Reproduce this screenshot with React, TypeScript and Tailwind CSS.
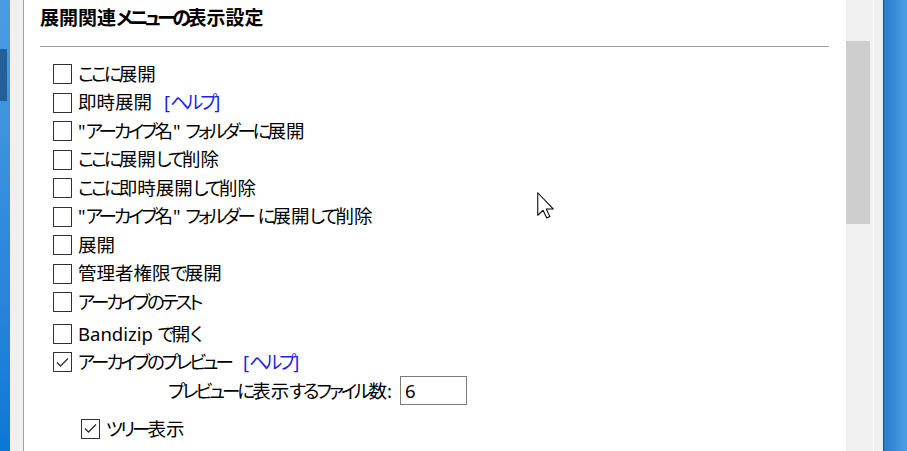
import React from "react";

const font = {
  fontFamily: '"Noto Sans", "Noto Sans CJK JP", sans-serif',
};

// kana in the original UI font are much narrower than in Noto Sans CJK,
// so tighten runs of kana a bit
function Jp({ text, kana = "tracking-[-3px]" }: { text: string; kana?: string }) {
  const parts = text.split(/([\u3040-\u30ff]+)/);
  return (
    <>
      {parts.map((p, i) =>
        /^[\u3040-\u30ff]+$/.test(p) ? (
          <span key={i} className={kana}>
            {p}
          </span>
        ) : (
          <span key={i}>{p}</span>
        ),
      )}
    </>
  );
}

function CheckBox({ checked }: { checked?: boolean }) {
  return (
    <span className="flex h-[20px] w-[19px] shrink-0 items-center justify-center border border-[#333333] bg-white">
      {checked && (
        <svg width="15" height="15" viewBox="0 0 15 15">
          <polyline
            points="2,7.5 5.5,11 13,3.5"
            fill="none"
            stroke="#333333"
            strokeWidth="1.4"
          />
        </svg>
      )}
    </span>
  );
}

function Help() {
  return (
    <span className="ml-[12px] text-[#1f1fe8]">
      [<Jp text="ヘルプ" />]
    </span>
  );
}

interface RowProps {
  label: string;
  checked?: boolean;
  help?: boolean;
  className?: string;
}

function Row({ label, checked, help, className = "h-[28.5px]" }: RowProps) {
  return (
    <div className={`flex items-center gap-[6px] ${className}`}>
      <CheckBox checked={checked} />
      <span className="whitespace-pre">
        <Jp text={label} />
        {help && <Help />}
      </span>
    </div>
  );
}

const items: { label: string; help?: boolean }[] = [
  { label: "ここに展開" },
  { label: "即時展開", help: true },
  { label: '"アーカイブ名" フォルダーに展開' },
  { label: "ここに展開して削除" },
  { label: "ここに即時展開して削除" },
  { label: '"アーカイブ名" フォルダー に展開して削除' },
  { label: "展開" },
  { label: "管理者権限で展開" },
  { label: "アーカイブのテスト" },
];

function Cursor() {
  return (
    <svg
      className="absolute left-[537px] top-[192px]"
      width="18"
      height="27"
      viewBox="0 0 12 18"
    >
      <path
        d="M0.5 0.5 L0.5 15.5 L4 12.2 L6.5 17.3 L8.6 16.4 L6.2 11.3 L10.8 11.3 Z"
        fill="white"
        stroke="black"
        strokeWidth="0.7"
        strokeLinejoin="round"
      />
    </svg>
  );
}

export default function App() {
  return (
    <div
      className="relative flex h-[451px] w-[907px] overflow-hidden bg-white text-black [font-feature-settings:'palt']"
      style={font}
    >
      {/* left window edge */}
      <div className="relative w-[10px] bg-gradient-to-b from-[#4b9de2] to-[#0a78d6]">
        <div className="absolute left-0 top-[49px] h-[52px] w-[7px] bg-[#245f9c]" />
      </div>
      <div className="w-[13px] bg-[#f0f0f0]" />
      <div className="w-px bg-[#a0a0a0]" />

      {/* content */}
      <div className="flex w-[822px] flex-col pl-[16px]">
        <div className="flex h-[37px] items-center text-[19px] font-bold leading-none">
          <span>
            <Jp text="展開関連メニューの表示設定" kana="tracking-[-3.5px]" />
          </span>
        </div>
        <div className="mt-[9px] h-px w-[789px] bg-[#a0a0a0]" />

        <div className="mt-[12.75px] flex flex-col pl-[13px] text-[18.5px] leading-none">
          {items.map((it) => (
            <Row key={it.label} label={it.label} help={it.help} />
          ))}
          <Row label="Bandizip で開く" className="mt-[4px] h-[28px]" />
          <Row label="アーカイブのプレビュー" checked help className="h-[27.5px]" />
          <div className="flex h-[30px] w-[414px] items-center justify-end gap-[8px]">
            <span>
              <Jp text="プレビューに表示するファイル数:" />
            </span>
            <div className="flex h-[29px] w-[67px] items-center border border-[#7a7a7a] pl-[4px]">
              6
            </div>
          </div>
          <Row label="ツリー表示" checked className="mt-[9px] h-[28px] pl-[28px]" />
        </div>
      </div>

      {/* scrollbar */}
      <div className="flex w-[27px] bg-[#f0f0f0]">
        <div className="mt-[41px] h-[183px] w-[24px] bg-[#cdcdcd]" />
      </div>
      <div className="w-px bg-[#fbfbfb]" />
      <div className="w-[9px] bg-[#f0f0f0]" />

      {/* right window edge */}
      <div className="w-px bg-[#1d4f82]" />
      <div className="flex-1 bg-gradient-to-r from-[#2a7ccb] to-[#4aa0e6]" />

      <Cursor />
    </div>
  );
}
